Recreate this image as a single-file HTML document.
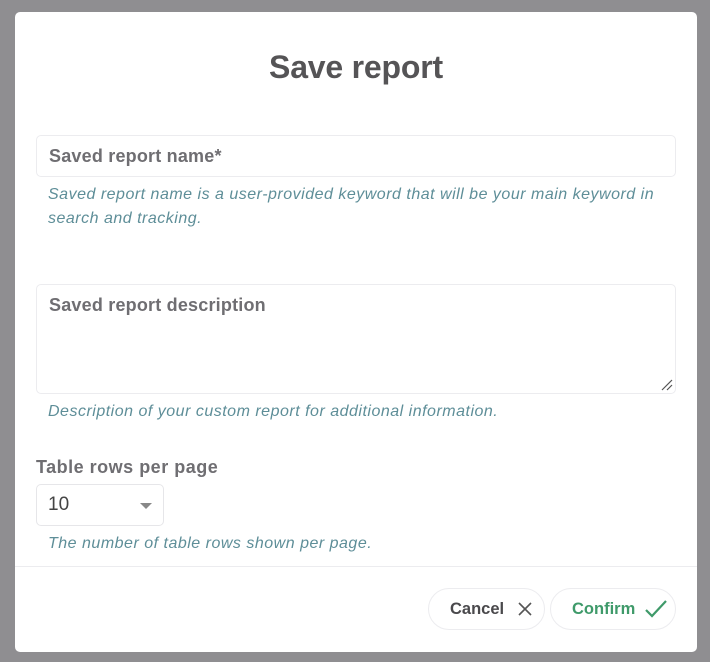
<!DOCTYPE html>
<html><head><style>
*{box-sizing:border-box;margin:0;padding:0}
body{width:710px;height:662px;background:#8f8e91;font-family:"Liberation Sans",sans-serif;position:relative;overflow:hidden}
.m{position:absolute;left:15px;top:12px;width:682px;height:640px;background:#fff;border-radius:5px}
h1{position:absolute;top:37px;left:0;width:100%;text-align:center;font-size:32px;font-weight:bold;color:#555456;letter-spacing:-0.2px}
.in{position:absolute;left:21px;width:640px;border:1px solid #ececef;border-radius:5px;font-size:18px;font-weight:bold;color:#6f6e72;padding-left:12px;letter-spacing:0.2px}
.h{position:absolute;left:33px;font-style:italic;color:#5e8e98;font-size:16px;line-height:24px;letter-spacing:0.5px}
.lbl{position:absolute;left:21px;top:445px;font-size:18px;font-weight:bold;color:#6f6e72;letter-spacing:0.5px}
.sel{position:absolute;left:21px;top:472px;width:128px;height:42px;border:1px solid #e6e6e9;border-radius:5px;font-size:19px;color:#444;padding:9px 0 0 11px}
.sel:after{content:"";position:absolute;right:11px;top:18px;border-left:6px solid transparent;border-right:6px solid transparent;border-top:6px solid #888}
.ft{position:absolute;left:0;top:554px;width:100%;border-top:1px solid #ececef}
.b{position:absolute;top:576px;height:42px;border:1px solid #ececef;border-radius:21px;font-size:16.5px;font-weight:bold;display:flex;align-items:center}
</style></head><body>
<div class="m">
<h1>Save report</h1>
<div class="in" style="top:123px;height:42px;padding-top:10px">Saved report name*</div>
<div class="h" style="top:171px;width:625px">Saved report name is a user-provided keyword that will be your main keyword in search and tracking.</div>
<div class="in" style="top:272px;height:110px;padding-top:10px">Saved report description
<svg style="position:absolute;right:2px;bottom:2px" width="12" height="12"><path d="M1 11L11 1M6 11L11 6" stroke="#555" stroke-width="1.2"/></svg></div>
<div class="h" style="top:388px">Description of your custom report for additional information.</div>
<div class="lbl">Table rows per page</div>
<div class="sel">10</div>
<div class="h" style="top:520px">The number of table rows shown per page.</div>
<div class="ft"></div>
<div class="b" style="left:413px;width:117px;color:#4a494c;padding-left:21px">Cancel
<svg style="margin-left:14px" width="14" height="14"><path d="M1 1L13 13M13 1L1 13" stroke="#555" stroke-width="1.6"/></svg></div>
<div class="b" style="left:535px;width:126px;color:#3f9a6a;padding-left:21px">Confirm
<svg style="margin-left:10px" width="22" height="18"><path d="M1 10L7 16L21 1" stroke="#3f9a6a" stroke-width="2.2" fill="none"/></svg></div>
</div>
</body></html>
